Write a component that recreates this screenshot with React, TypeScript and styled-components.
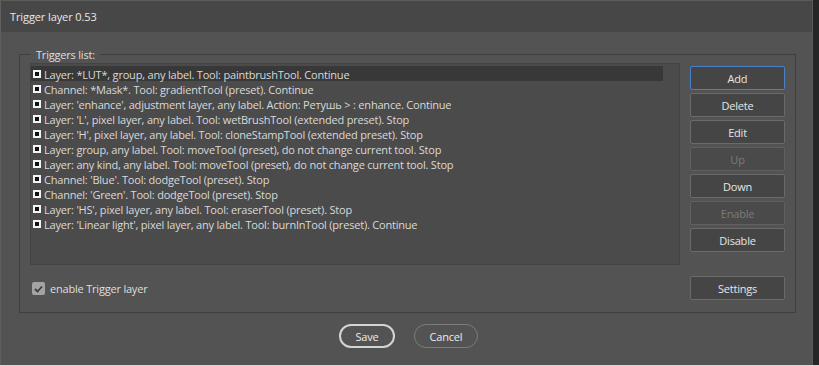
import React from "react";
import styled, { createGlobalStyle } from "styled-components";

const GlobalStyle = createGlobalStyle`
  html, body { margin: 0; padding: 0; background: #d9d9d9; }
  body { font-family: "Open Sans", "Noto Sans", sans-serif; letter-spacing: -0.2px; }
  * { box-sizing: border-box; }
`;

const Screen = styled.div`
  width: 819px;
  height: 365px;
  background: #262626;
  display: flex;
`;

const Window = styled.div`
  width: 813px;
  height: 365px;
  background: #535353;
  border-left: 1px solid #5f5f5f;
  border-right: 1px solid #5a5a5a;
  border-top: 1px solid #5c5c5c;
  display: flex;
  flex-direction: column;
`;

const TitleBar = styled.div`
  height: 31px;
  background: #474747;
  color: #e8e8e8;
  font-size: 11px;
  letter-spacing: -0.1px;
  display: flex;
  align-items: center;
  padding-left: 9px;
  padding-bottom: 1px;
`;

const Body = styled.div`
  padding: 22px 16px 0 18px;
  display: flex;
  flex-direction: column;
`;

const Group = styled.div`
  position: relative;
  border: 1px solid #3f3f3f;
  height: 259px;
  padding: 8px 10px 0 10px;
  display: flex;
  gap: 10px;
`;

const GroupLabel = styled.span`
  position: absolute;
  top: -8px;
  left: 11px;
  padding: 0 5px;
  background: #535353;
  color: #dedede;
  font-size: 11px;
  line-height: 16px;
`;

const LeftCol = styled.div`
  width: 650px;
  display: flex;
  flex-direction: column;
`;

const List = styled.div`
  height: 202px;
  background: #4b4b4b;
  border: 1px solid #444;
  padding: 2px 16px 0 0;
  display: flex;
  flex-direction: column;
`;

const Row = styled.div<{ $selected?: boolean }>`
  height: 15px;
  display: flex;
  align-items: center;
  background: ${(p) => (p.$selected ? "#383838" : "transparent")};
  color: #d9d9d9;
  font-size: 11px;
  line-height: 15px;
  padding-top: 1px;
  white-space: nowrap;
  padding-left: 2px;
`;

const RowBox = styled.span`
  width: 8px;
  height: 8px;
  border: 2px solid #f4f4f4;
  background: #111;
  margin-right: 3px;
  margin-top: -1px;
  flex: none;
`;

const CheckRow = styled.label`
  margin-top: 16px;
  display: flex;
  align-items: center;
  gap: 5px;
  padding-left: 2px;
  color: #dedede;
  font-size: 11px;
`;

const CheckBox = styled.span`
  width: 13px;
  height: 13px;
  border-radius: 2px;
  background: #a3a3a3;
  display: flex;
  align-items: center;
  justify-content: center;
`;

const RightCol = styled.div`
  width: 95px;
  padding-top: 3px;
  padding-bottom: 12px;
  display: flex;
  flex-direction: column;
  gap: 3px;
`;

const Btn = styled.button<{ $focus?: boolean }>`
  height: 24px;
  width: 95px;
  background: #454545;
  border: 1px solid ${(p) => (p.$focus ? "#4a80c8" : "#6a6a6a")};
  border-radius: 2px;
  color: #e6e6e6;
  font-family: inherit;
  letter-spacing: inherit;
  font-size: 11px;
  padding: 0;
  &:disabled {
    color: #7c7c7c;
    background: #4a4a4a;
    border-color: #606060;
  }
`;

const SettingsBtn = styled(Btn)`
  margin-top: auto;
`;

const Footer = styled.div`
  margin-top: 11px;
  display: flex;
  justify-content: center;
  gap: 19px;
  padding-left: 2px;
`;

const Pill = styled.button<{ $primary?: boolean }>`
  height: 24px;
  width: ${(p) => (p.$primary ? "56px" : "64px")};
  border-radius: 12px;
  background: transparent;
  border: ${(p) => (p.$primary ? "2px solid #d4d4d4" : "1px solid #7c7c7c")};
  color: #ececec;
  font-family: inherit;
  letter-spacing: inherit;
  font-size: 11px;
  padding: 0;
`;

const rows = [
  "Layer: *LUT*, group, any label. Tool: paintbrushTool. Continue",
  "Channel: *Mask*. Tool: gradientTool (preset). Continue",
  "Layer: 'enhance', adjustment layer, any label. Action: Ретушь > : enhance. Continue",
  "Layer: 'L', pixel layer, any label. Tool: wetBrushTool (extended preset). Stop",
  "Layer: 'H', pixel layer, any label. Tool: cloneStampTool (extended preset). Stop",
  "Layer: group, any label. Tool: moveTool (preset), do not change current tool. Stop",
  "Layer: any kind, any label. Tool: moveTool (preset), do not change current tool. Stop",
  "Channel: 'Blue'. Tool: dodgeTool (preset). Stop",
  "Channel: 'Green'. Tool: dodgeTool (preset). Stop",
  "Layer: 'HS', pixel layer, any label. Tool: eraserTool (preset). Stop",
  "Layer: 'Linear light', pixel layer, any label. Tool: burnInTool (preset). Continue",
];

export default function App() {
  return (
    <>
      <GlobalStyle />
      <Screen>
        <Window>
          <TitleBar>Trigger layer 0.53</TitleBar>
          <Body>
            <Group>
              <GroupLabel>Triggers list:</GroupLabel>
              <LeftCol>
                <List>
                  {rows.map((r, i) => (
                    <Row key={i} $selected={i === 0}>
                      <RowBox />
                      {r}
                    </Row>
                  ))}
                </List>
                <CheckRow>
                  <CheckBox>
                    <svg width="9" height="8" viewBox="0 0 9 8">
                      <path d="M1 4 L3.5 6.5 L8 1.5" fill="none" stroke="#3c3c3c" strokeWidth="1.8" />
                    </svg>
                  </CheckBox>
                  enable Trigger layer
                </CheckRow>
              </LeftCol>
              <RightCol>
                <Btn $focus>Add</Btn>
                <Btn>Delete</Btn>
                <Btn>Edit</Btn>
                <Btn disabled>Up</Btn>
                <Btn>Down</Btn>
                <Btn disabled>Enable</Btn>
                <Btn>Disable</Btn>
                <SettingsBtn>Settings</SettingsBtn>
              </RightCol>
            </Group>
            <Footer>
              <Pill $primary>Save</Pill>
              <Pill>Cancel</Pill>
            </Footer>
          </Body>
        </Window>
      </Screen>
    </>
  );
}
